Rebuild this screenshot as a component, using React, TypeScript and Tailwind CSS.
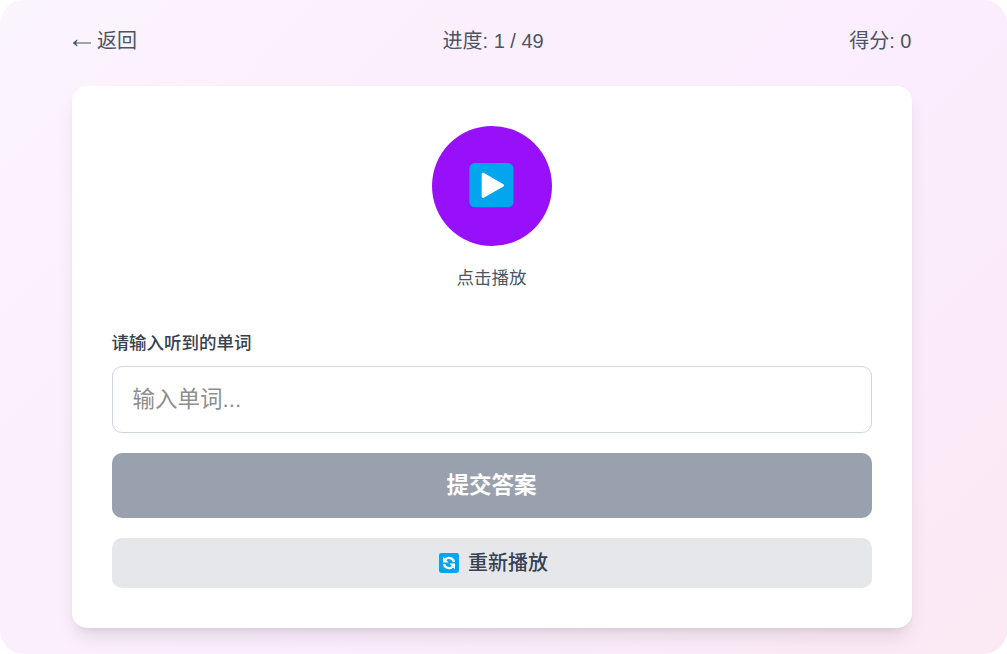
import { useState } from "react";

function BackArrow() {
  return (
    <svg viewBox="0 0 20 12" className="w-5 h-3 mt-[3px]" aria-hidden="true">
      <path
        d="M0.7 6 5.1 2.5 5.6 3 4.1 5.5H19V6.5H4.1L5.6 9 5.1 9.5z"
        fill="currentColor"
      />
    </svg>
  );
}

function PlayIcon() {
  return (
    <svg viewBox="0 0 45 45" className="w-[45px] h-[45px] mr-px mb-px" aria-hidden="true">
      <rect x="0.3" y="0.1" width="44.2" height="44.2" rx="5.6" fill="#03a5ef" />
      <path
        d="M14 11v22.6L33.8 22.3z"
        fill="#fff"
        stroke="#fff"
        strokeWidth="2.6"
        strokeLinejoin="round"
      />
    </svg>
  );
}

function ReplayIcon() {
  return (
    <svg viewBox="0 0 20 20" className="w-5 h-5 shrink-0" aria-hidden="true">
      <rect width="20" height="20" rx="2.4" fill="#03a5ef" />
      <path
        d="M14.9 9A5 5 0 0 0 6.4 6.4M5.1 11a5 5 0 0 0 8.5 2.6"
        fill="none"
        stroke="#fff"
        strokeWidth="2.3"
      />
      <path d="M4 3.8v5.6h5.6zM16 16.2v-5.6h-5.6z" fill="#fff" />
    </svg>
  );
}

export default function App() {
  const [answer, setAnswer] = useState("");

  return (
    <div className="w-full h-[654px] rounded-[24px] overflow-hidden bg-[linear-gradient(135deg,#faf5ff_0%,#fcf0fd_20%,#fbedfd_60%,#fbe9f3_100%)] font-['Liberation_Sans','Noto_Sans_CJK_SC',sans-serif]">
      <div className="w-[840px] ml-[71.5px] pt-[26px]">
        <div className="flex items-center justify-between mb-[30px] text-xl leading-[30px] text-[#4a5565]">
          <button className="flex items-center gap-[5.5px]">
            <BackArrow />
            <span>返回</span>
          </button>
          <div>进度: 1 / 49</div>
          <div>得分: 0</div>
        </div>

        <div className="ml-[0.5px] w-[840px] p-10 rounded-[15px] bg-white shadow-[0_12px_19px_-4px_rgba(0,0,0,0.1),0_5px_8px_-5px_rgba(0,0,0,0.1)]">
          <div className="flex flex-col items-center mb-10">
            <button
              aria-label="播放"
              className="w-[120px] h-[120px] rounded-full bg-[#9810fa] flex items-center justify-center"
            >
              <PlayIcon />
            </button>
            <p className="mt-5 pr-px text-[17.5px] leading-[25px] text-[#4a5565]">点击播放</p>
          </div>

          <label htmlFor="answer" className="block mb-2.5 -ml-[0.5px] text-[17.5px] leading-[25px] font-medium text-[#364153]">
            请输入听到的单词
          </label>
          <input
            id="answer"
            type="text"
            value={answer}
            onChange={(e) => setAnswer(e.target.value)}
            placeholder="输入单词..."
            className="block w-full h-[67px] px-[19.5px] rounded-[10px] border border-[#d1d5dc] bg-white text-[22.5px] text-gray-800 placeholder:text-[#8e8e8e]"
          />

          <button className="mt-5 w-full h-[65px] pr-px rounded-[10px] bg-[#99a1af] text-[22.5px] leading-[35px] font-bold text-white">
            提交答案
          </button>
          <button className="mt-5 w-full h-[50px] pl-[3px] rounded-[10px] bg-[#e5e7eb] flex items-center justify-center gap-[9px] text-xl leading-[30px] font-medium text-[#364153]">
            <ReplayIcon />
            <span>重新播放</span>
          </button>
        </div>
      </div>
    </div>
  );
}
